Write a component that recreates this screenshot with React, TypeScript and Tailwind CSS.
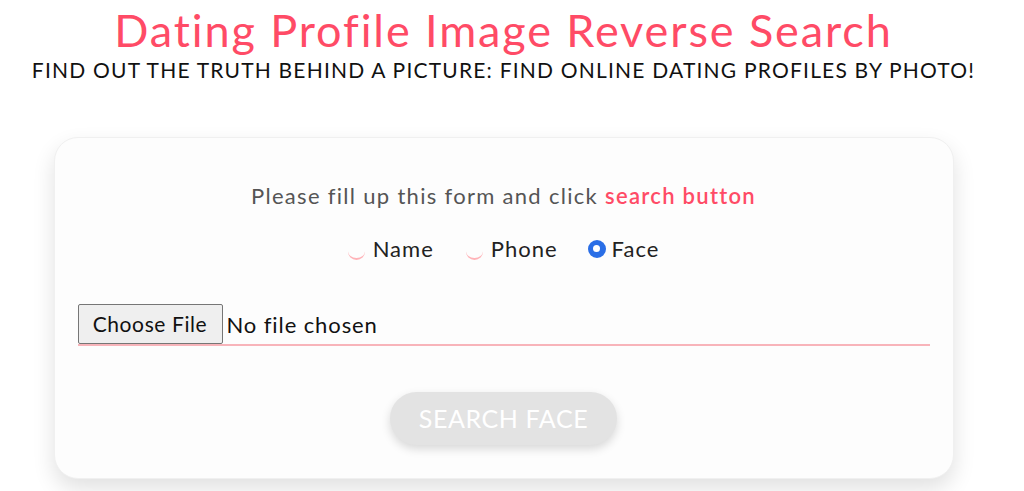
import { useState } from 'react'

const font = { fontFamily: '"Lato", "Noto Sans", sans-serif' }

function Radio({ label, checked, onClick }: { label: string; checked: boolean; onClick: () => void }) {
  return (
    <label className="flex items-center cursor-pointer" onClick={onClick}>
      {checked ? (
        <span className="w-[18px] h-[18px] rounded-full bg-[#2a6ee6] flex items-center justify-center mr-[6px]">
          <span className="w-[7px] h-[7px] rounded-full bg-white" />
        </span>
      ) : (
        <span className="w-[17px] h-[17px] rounded-full border-b-2 border-[#ffb3b8] mr-[8px] mt-[6px]" />
      )}
      <span className="text-[22px] tracking-[1px] text-[#222]">{label}</span>
    </label>
  )
}

export default function App() {
  const [mode, setMode] = useState('face')

  return (
    <div className="min-h-screen bg-white" style={font}>
      <div className="w-[1007px] flex flex-col items-center">
        <h1 className="text-[45px] leading-[56px] text-[#ff4b66] mt-[2px] tracking-[1.9px]">
          Dating Profile Image Reverse Search
        </h1>
        <p className="text-[21px] leading-[24px] text-[#111] uppercase tracking-[1.2px]">
          Find out the truth behind a picture: find online dating profiles by photo!
        </p>

        {/* form card */}
        <div className="mt-[55px] w-[900px] h-[342px] rounded-[24px] bg-[#fdfdfd] border border-[#f0f0f0] shadow-[0_10px_22px_rgba(0,0,0,0.12)] px-[23px] flex flex-col items-center">
          <p className="mt-[41px] text-[22px] tracking-[1.3px] text-[#555]">
            Please fill up this form and click <span className="text-[#ff4b66] font-semibold">search button</span>
          </p>

          <div className="mt-[20px] flex items-center">
            <Radio label="Name" checked={mode === 'name'} onClick={() => setMode('name')} />
            <span className="w-[32px]" />
            <Radio label="Phone" checked={mode === 'phone'} onClick={() => setMode('phone')} />
            <span className="w-[30px]" />
            <Radio label="Face" checked={mode === 'face'} onClick={() => setMode('face')} />
          </div>

          <div className="mt-[39px] w-full border-b-2 border-[#f8b4ba] flex items-center">
            <button className="h-[40px] w-[145px] text-[21px] tracking-[0.6px] text-[#111] bg-[#efefef] border border-[#767676] rounded-[2px]">
              Choose File
            </button>
            <span className="ml-[4px] text-[22px] tracking-[0.9px] text-[#111]">No file chosen</span>
          </div>

          <button className="mt-[46px] w-[227px] h-[53px] rounded-full bg-[#e3e3e3] text-white text-[25px] tracking-[0.6px] shadow-[0_4px_10px_rgba(0,0,0,0.15)]">
            SEARCH FACE
          </button>
        </div>
      </div>
    </div>
  )
}
